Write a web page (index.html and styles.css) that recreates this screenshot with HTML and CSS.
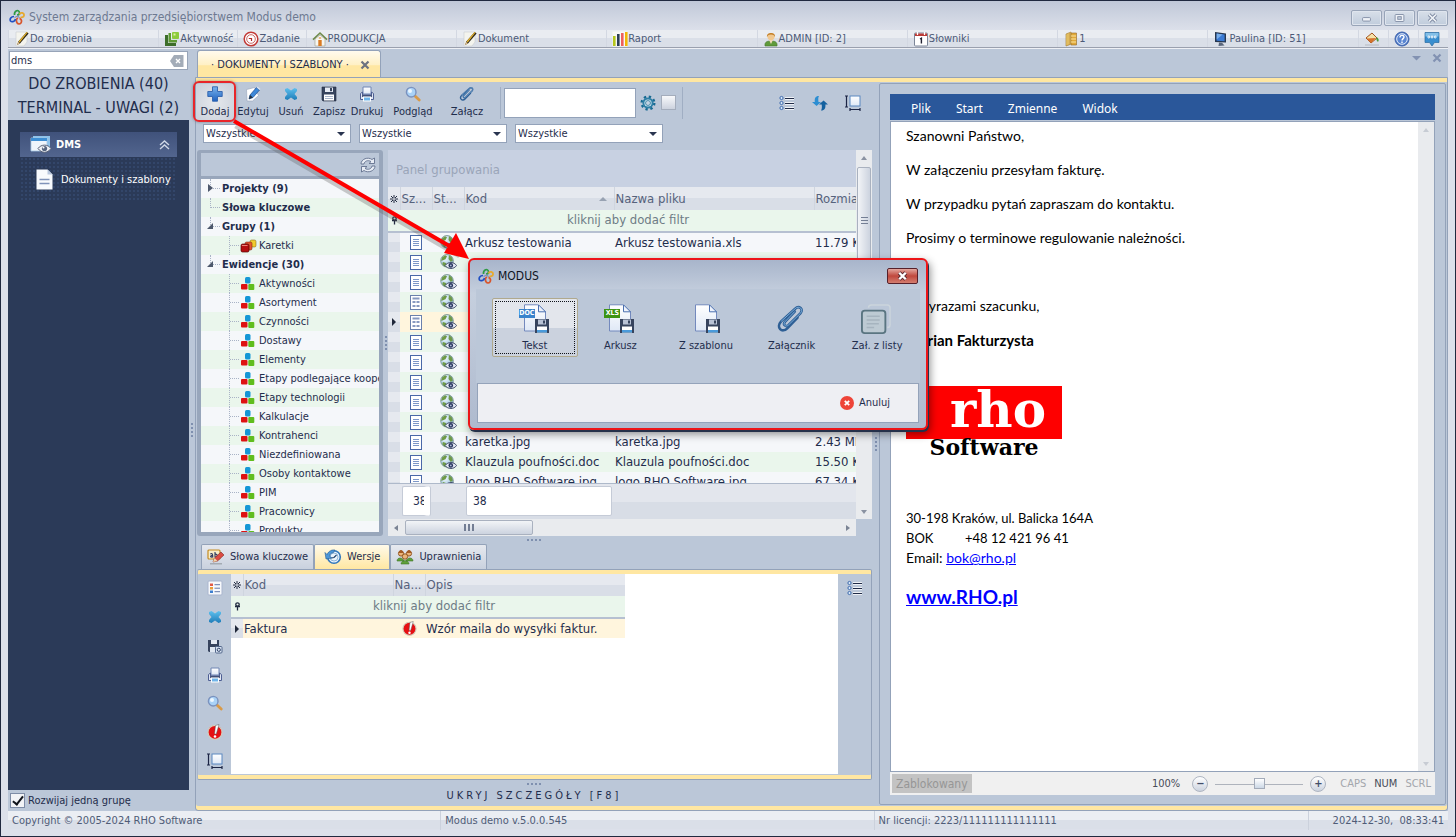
FILE: index.html
```html
<!DOCTYPE html>
<html lang="pl">
<head>
<meta charset="utf-8">
<title>System zarządzania przedsiębiorstwem Modus demo</title>
<link rel="stylesheet" href="styles.css">
</head>
<body>
<svg class="sprite" aria-hidden="true">
  <defs>
    <linearGradient id="gBlue" x1="0" y1="0" x2="0" y2="1"><stop offset="0" stop-color="#7ab4ec"/><stop offset="1" stop-color="#1f62c0"/></linearGradient>
    <linearGradient id="gSky" x1="0" y1="0" x2="0" y2="1"><stop offset="0" stop-color="#5ec0ee"/><stop offset="1" stop-color="#1e7cb8"/></linearGradient>
    <linearGradient id="gPage" x1="0" y1="0" x2="0" y2="1"><stop offset="0" stop-color="#ffffff"/><stop offset="1" stop-color="#dfe8f6"/></linearGradient>
    <radialGradient id="gGlobe" cx=".35" cy=".3" r=".9"><stop offset="0" stop-color="#f2f9fd"/><stop offset=".6" stop-color="#a9cbe2"/><stop offset="1" stop-color="#5582a0"/></radialGradient>
  </defs>
  <symbol id="i-logo" viewBox="0 0 16 16"><g fill="none" stroke-width="1.700"><path d="M5.500 6C5 2 10-.5 10.500 4c0 1.500-1 2-2.500 2" stroke="#2f9a45"/><path d="M10.500 5.500c1-3 5-1.500 4.500 1-.3 2-2.500 2-3.500 1.500" stroke="#e7a92d"/><path d="M9 9c-2.500 1-2 5.500 1 6 3-.3 3.500-4.500.5-5.500" stroke="#d8552c"/><path d="M5 7.500C2 7.500.500 10 1.500 12c1.500 1.500 4.500.5 5-2" stroke="#1f4fc4"/><path d="M5.500 8.500l3.500-1.500 1.500 2" stroke="#7d8eb8" stroke-width="1.200"/></g></symbol>
  <symbol id="i-pencilpage" viewBox="0 0 16 16"><path d="M2 1h11v10l-3 4H2z" fill="#f4f4ee" stroke="#c9ccd2" stroke-width=".6"/><path d="M3 14l1.300-3.400L12.600 1l2 1.400L6 12.400z" fill="#30291a"/><path d="M4.600 10.600L12.600 1l.9.600-7.800 9.800z" fill="#e8b52c"/><path d="M3 14l1.200-3 1.700 1.300z" fill="#ebc893"/></symbol>
  <symbol id="i-steps" viewBox="0 0 16 16"><path d="M1 4h3v8h8v3H1z" fill="#3d6e2a"/><path d="M4.500 2h2.500v7h6v2.500H4.500z" fill="#5e9a33"/><rect x="8" y="1" width="7" height="7" rx="1" fill="#8ccb3c"/><rect x="9.500" y="2.500" width="2" height="2" fill="#ddf2a4"/></symbol>
  <symbol id="i-clock" viewBox="0 0 16 16"><circle cx="8" cy="8" r="6.800" fill="#fff" stroke="#c23a36" stroke-width="1.500"/><circle cx="8" cy="8" r="4.300" fill="#fff" stroke="#c96a66" stroke-width="1"/><path d="M5.800 7.500H8.500V10" fill="none" stroke="#b02c28" stroke-width="1.200"/></symbol>
  <symbol id="i-house" viewBox="0 0 16 16"><path d="M3 8v7h10V8L8 4z" fill="#f6f6f0" stroke="#9a9a8c" stroke-width=".6"/><path d="M1 8.600L8 2l7 6.600" fill="none" stroke="#6f8b4a" stroke-width="1.600"/><rect x="6.300" y="9" width="3.400" height="6" fill="#d97b24"/><path d="M6.800 7h2.400" stroke="#e39c42" stroke-width="1.300"/></symbol>
  <symbol id="i-bars" viewBox="0 0 16 16"><rect x=".5" y=".5" width="15" height="15" fill="#f8f8f6"/><rect x="1" y="5" width="2.600" height="10" fill="#b5c61c"/><rect x="5" y="3" width="2.600" height="12" fill="#2a3d56"/><rect x="9" y="2" width="2.600" height="13" fill="#ee605c"/><rect x="13" y="1" width="2.600" height="14" fill="#f2b705"/></symbol>
  <symbol id="i-person" viewBox="0 0 16 16"><path d="M2 15c-.6-4 2-5 6-5s6.600 1 6 5z" fill="#5f9a3a" stroke="#47762b" stroke-width=".6"/><path d="M6 9h4l-2 4z" fill="#f2d9b6"/><circle cx="8" cy="5.600" r="3.600" fill="#f0c890"/><path d="M4 6C3 .5 13 .5 12 6c-1-2-2-2.600-4-2.600S5 4 4 6z" fill="#c5822c"/></symbol>
  <symbol id="i-calendar" viewBox="0 0 16 16"><rect x="1.500" y="2" width="13" height="13" rx="1" fill="#fff" stroke="#7c8698"/><path d="M2 2.500h12V5H2z" fill="#bb3b37"/><path d="M4.500 1v3M11.500 1v3" stroke="#fff" stroke-width="1.200"/><path d="M7 8l1.400-.8V12.500" fill="none" stroke="#223" stroke-width="1.400"/></symbol>
  <symbol id="i-coins" viewBox="0 0 16 16"><path d="M3 3l5-2v12l-5 2z" fill="#f0cf70" stroke="#9c742a" stroke-width=".6"/><path d="M8 2h5.500v12H8z" fill="#e0a93a" stroke="#94692a" stroke-width=".6"/><path d="M8 5h5M8 8h5M8 11h5" stroke="#fbe4a0" stroke-width="1"/><path d="M5 2.500v12M6.500 2v12" stroke="#c1913a" stroke-width=".6"/></symbol>
  <symbol id="i-monitor" viewBox="0 0 16 16"><path d="M2 1l11 1.500v9L2 11z" fill="#27374f"/><path d="M3.600 2.600l8 1v6.600l-8-.4z" fill="#3b7bd4"/><path d="M3.600 2.600l6 .8-6 5z" fill="#79aeea"/><path d="M6 11.500l3 .2 2.500 2.800-6 .5z" fill="#59667c"/></symbol>
  <symbol id="i-bucket" viewBox="0 0 16 16"><path d="M2 7l6-5 5 5-6 5z" fill="#f5e2a8" stroke="#a2531e" stroke-width="1"/><path d="M2.500 7.500L12 7l-5 5z" fill="#d5732c"/><path d="M12.500 6c2 1 3 3 1.500 5-1.500-1-2-3-1.500-5z" fill="#4b9a3a"/><path d="M1 14h14" stroke="#c8ccd4" stroke-width="2"/></symbol>
  <symbol id="i-help" viewBox="0 0 16 16"><circle cx="8" cy="8" r="7" fill="#4d78c6" stroke="#3d62aa"/><circle cx="8" cy="8" r="5.300" fill="#5a86d2" stroke="#e5edf9"/><path d="M6 6.500c0-3 4-2.600 4-.4C10 7.700 8 7.600 8 9.500M8 10.600v1.300" fill="none" stroke="#fff" stroke-width="1.400"/></symbol>
  <symbol id="i-chat" viewBox="0 0 16 16"><path d="M1 1.500h14v10h-4.500L8 15l-2.500-3.500H1z" fill="#398ecf" stroke="#286a9f" stroke-width=".7"/><path d="M1.500 2h13v3.500h-13z" fill="#82bfe8"/><g fill="none" stroke="#fff"><circle cx="4.800" cy="6" r="1"/><circle cx="8" cy="6" r="1"/><circle cx="11.200" cy="6" r="1"/></g></symbol>
  <symbol id="i-plus" viewBox="0 0 16 16"><path d="M5.500.8h5v4.700h4.700v5h-4.700v4.700h-5v-4.700H.8v-5h4.700z" fill="url(#gBlue)" stroke="#2f62ad" stroke-width=".9"/></symbol>
  <symbol id="i-edit" viewBox="0 0 16 16"><path d="M1.500 3.500l8-2 4 8-6 5.500H2z" fill="#fff" stroke="#9eabc0" stroke-width=".7"/><path d="M4 13l1-4 6.500-7.500 3 2.500L8 11.500z" fill="#3d88d8" stroke="#1c4a8c" stroke-width=".7"/><path d="M4 13l1-4 3 2.500z" fill="#24303f"/><path d="M11.500 1.500l1-1 3 2.500-1 1z" fill="#d8e3f0"/></symbol>
  <symbol id="i-cross" viewBox="0 0 16 16"><path d="M2 3l2.500-1L8 4.500 11.500 2 14 3v2L11.500 8 14 11v2l-2.500 1L8 11.500 4.500 14 2 13v-2L4.500 8 2 5z" fill="url(#gSky)"/></symbol>
  <symbol id="i-floppy" viewBox="0 0 16 16"><path d="M1 1h14v14H2l-1-1z" fill="#37445e" stroke="#222c42" stroke-width=".6"/><rect x="4" y="1.500" width="8" height="4.500" fill="#e6ebf4"/><rect x="9" y="2" width="2" height="3.200" fill="#37445e"/><rect x="3" y="8.500" width="10" height="6" fill="#fff"/><path d="M4 10.500h8M4 12.500h8" stroke="#8fa0bb" stroke-width=".8"/></symbol>
  <symbol id="i-printer" viewBox="0 0 16 16"><path d="M4 1h8v7H4z" fill="url(#gPage)" stroke="#7186b4"/><path d="M1.500 7.500L3.500 6v3h9V6l2 1.500v6h-13z" fill="#dfe5f2" stroke="#4e5f93"/><path d="M3 10h10" stroke="#2e3c66" stroke-width="1.600"/><rect x="4.500" y="11" width="7" height="4" fill="#6fb5ea" stroke="#fff"/></symbol>
  <symbol id="i-magnify" viewBox="0 0 16 16"><path d="M10 10l4.200 4" stroke="#d99a48" stroke-width="2.800" stroke-linecap="round"/><circle cx="6.200" cy="6.200" r="4.800" fill="#a9d2f7" stroke="#7b92be" stroke-width="1.400"/><circle cx="5" cy="5" r="2" fill="#ecf7ff"/></symbol>
  <symbol id="i-clip" viewBox="0 0 32 32"><path d="M20 8L9.500 19c-2.500 3 1 6 3.700 3.500L26 10c4-4.500-1.500-9-5.600-5L5.500 18.500C-.5 25 6.500 31.500 12 26L23 14.500" fill="none" stroke="#2e5f95" stroke-width="2.800" stroke-linecap="round"/><path d="M20 8L9.500 19c-2.500 3 1 6 3.700 3.500L26 10c4-4.500-1.500-9-5.600-5L5.500 18.500" fill="none" stroke="#7eb0dc" stroke-width="1"/></symbol>
  <symbol id="i-gear" viewBox="0 0 16 16"><circle cx="8" cy="8" r="6.300" fill="none" stroke="#176a92" stroke-width="2.400" stroke-dasharray="2.300 2.650"/><circle cx="8" cy="8" r="4.600" fill="#d9ecf4" stroke="#2f7fa6" stroke-width="2"/><circle cx="8" cy="8" r="2.500" fill="#c3d3e2" stroke="#176a92" stroke-width=".7"/></symbol>
  <symbol id="i-list" viewBox="0 0 16 16"><g fill="#d8e8fa" stroke="#3f6cae"><circle cx="2.500" cy="3" r="1.600"/><circle cx="2.500" cy="8" r="1.600"/><circle cx="2.500" cy="13" r="1.600"/></g><path d="M6 3.500H15M6 8.500H15M6 13.500H15" stroke="#fff" stroke-width="2.600"/><path d="M6 3.500H15M6 8.500H15M6 13.500H15" stroke="#202c48" stroke-width="1"/></symbol>
  <symbol id="i-swap" viewBox="0 0 16 16"><path d="M7 1C3 1 2.600 3.500 2.800 7H0l4.600 4L9 7H6.500C6.200 4.500 6 2.500 7 1z" fill="#2d8ed2"/><path d="M9 15.500c4 0 4.600-2.500 4.400-6H16l-4.400-4L7 9.500h2.700c.3 2.500.3 4.500-.7 6z" fill="#14619f"/></symbol>
  <symbol id="i-size" viewBox="0 0 16 16"><rect x="5" y="1" width="10" height="10" fill="url(#gPage)" stroke="#5b88c0"/><path d="M1.500 1v11M0 1h3M0 12h3M5 14.500h10M5 13v3M15 13v3" stroke="#1b2444" stroke-width="1.200"/></symbol>
  <symbol id="i-refresh" viewBox="0 0 16 16"><g fill="#e7ecf4" stroke="#62718d" stroke-width=".9"><path d="M1 7C1 2 8-.5 12 2.500L14.500 1v5.500H9L11 4.600C8 2.600 4.500 4 4 7z"/><path d="M15 9c0 5-7 7.500-11 4.500L1.500 15V9.500H7l-2 1.900C8 13.400 11.500 12 12 9z"/></g></symbol>
  <symbol id="i-dots3" viewBox="0 0 16 16"><rect x="5" y="1" width="5.500" height="6.500" rx="1.500" fill="#1597d6"/><rect x="1" y="8" width="6.500" height="5.500" rx="1" fill="#de1212"/><rect x="8.300" y="8" width="6" height="6" rx="1" fill="#60bd1e"/></symbol>
  <symbol id="i-boxes" viewBox="0 0 17 14"><rect x="10" y="1" width="6" height="7" rx="1.500" fill="#f1cc2d" stroke="#7a5a10" stroke-width=".5"/><rect x="5" y="3" width="7" height="8" rx="1.500" fill="#e4572f" stroke="#6d1a10" stroke-width=".5"/><rect x="1" y="5" width="8" height="8" rx="1.500" fill="#b50f0f" stroke="#500606" stroke-width=".7"/><path d="M2 6.500h5.500" stroke="#ee8275"/></symbol>
  <symbol id="i-doc" viewBox="0 0 12 15"><rect x=".5" y=".5" width="11" height="14" fill="#fff" stroke="#4a68a8"/><path d="M3 4.500h6M3 6.500h6M3 8.500h6M3 10.500h6" stroke="#7d97c8"/></symbol>
  <symbol id="i-form" viewBox="0 0 12 15"><rect x=".5" y=".5" width="11" height="14" fill="#fff" stroke="#6a80ac"/><path d="M2.500 3.500h7M2.500 7h3M6.500 7h3M2.500 11h3M6.500 11h3" stroke="#8799c0" stroke-width="1.800"/></symbol>
  <symbol id="i-globe" viewBox="0 0 17 16"><circle cx="7" cy="6.800" r="6.300" fill="url(#gGlobe)" stroke="#4d6d66" stroke-width=".6"/><path d="M2 3.500l3-2.300 2 1-1.500 3-2.500 1-1.800.8zM9 1l3 2.500.8 3-2 1.500L8.500 5zM3 8l3 1 1 3-1 .8C3 12 1.500 10 3 8z" fill="#6f9a48"/><path d="M5 11.500c3-4 9-4 11.500 0-2.500 4-8.500 4-11.500 0z" fill="#e3e8f2" stroke="#303b5e" stroke-width=".9"/><circle cx="10.800" cy="11.400" r="2.300" fill="#26345c"/><circle cx="10.800" cy="11.400" r=".9" fill="#aebbd8"/></symbol>
  <symbol id="i-alert" viewBox="0 0 16 16"><circle cx="8" cy="8.300" r="7" fill="#e60f12" stroke="#d3cdbb" stroke-width="1.200"/><path d="M8.500 1.500L12 .5 9.300 10H7.500z" fill="#fff" stroke="#555" stroke-width=".5"/><circle cx="8" cy="12.500" r="1.300" fill="#fff"/></symbol>
  <symbol id="i-words" viewBox="0 0 18 16"><rect x="1" y="1" width="12" height="9" rx="1" fill="#f7edc8" stroke="#c58c22" stroke-width="1.200"/><path d="M3.300 5c2-1 2.500 0 2.500 3-3 .6-3-1.500 0-1.600M8 3v5c3 .3 3-3.300 0-2.800" fill="none" stroke="#2f3b60" stroke-width="1.100"/><path d="M6 13l1.500-4 6.500-6 3 3-6.500 6z" fill="#db4b42" stroke="#7d2b27" stroke-width=".6"/><path d="M6 13l1.500-4 3 3z" fill="#efd6a8"/><path d="M3 14.800h12" stroke="#9aa0a8" stroke-width="1.200"/></symbol>
  <symbol id="i-history" viewBox="0 0 18 16"><circle cx="10" cy="8" r="6.300" fill="#eaf4fc" stroke="#3277bb" stroke-width="1.600"/><circle cx="10" cy="8" r="4" fill="none" stroke="#86aed4" stroke-width=".9"/><path d="M7.500 9l2.500-.5L12.500 6" fill="none" stroke="#1e3e66" stroke-width="1.100"/><path d="M1 3.500l2 2C4.500 2 8 .5 11 1L9.500 3.500C7 3.800 6 5 5.600 7.300L8 9 2 10z" fill="#4c97d9" stroke="#235a94" stroke-width=".6"/></symbol>
  <symbol id="i-group" viewBox="0 0 18 16"><path d="M1 12c0-4 6-4 7 0zM10 12c1-4 7-4 7 0zM5 15c0-4.500 8-4.500 8 0z" fill="#5fa03a" stroke="#3e7426" stroke-width=".6"/><g fill="#eab57a" stroke="#8c4f1c" stroke-width=".9"><circle cx="5" cy="4.500" r="2.600"/><circle cx="13" cy="4.500" r="2.600"/><circle cx="9" cy="7.500" r="2.700"/></g><path d="M2.500 4c1-4 4-4 5 0M10.500 4c1-4 4-4 5 0" fill="#a35a24"/></symbol>
  <symbol id="i-props" viewBox="0 0 16 16"><rect x="1" y="1" width="14" height="14" rx="1" fill="#f7f9fc" stroke="#a9b5ce"/><path d="M3 3.500h3v2.500H3z" fill="#e05b48"/><path d="M3 7h3v2.500H3z" fill="#e79d3b"/><path d="M3 10.500h3V13H3z" fill="#3d7fd0"/><path d="M7.500 4.700H13M7.500 8.200H13M7.500 11.700H13" stroke="#6278a8"/></symbol>
  <symbol id="i-save2" viewBox="0 0 16 16"><path d="M1 2h11v12H2l-1-1z" fill="#37445e"/><rect x="4" y="2" width="6" height="4" fill="#e6ebf4"/><rect x="3" y="9" width="7" height="5" fill="#dfe7f2"/><rect x="8.500" y="8.500" width="6.500" height="6.500" rx="1" fill="#d8e3f2" stroke="#54688c"/><circle cx="11.800" cy="11.800" r="1.600" fill="none" stroke="#32456c"/></symbol>
  <symbol id="i-window" viewBox="0 0 22 19"><path d="M3 1h17v12H3z" fill="#8ec2ea"/><path d="M1 3h16v13H1z" fill="#eef5fc" stroke="#a8c9e6" stroke-width=".8"/><path d="M1 3h16v3H1z" fill="#3e8fd4"/><path d="M8 13.500c3-4.500 10-4.500 13 0-3.500 5-9.500 5-13 0z" fill="#edf0f5" stroke="#596278"/><circle cx="14.500" cy="13.500" r="2.600" fill="#56657f"/><circle cx="13.500" cy="12.500" r="1" fill="#fff"/></symbol>
  <symbol id="i-paper" viewBox="0 0 17 21"><path d="M.5.500h11l5 5v15H.5z" fill="#f8fafd"/><path d="M11.500.500v5h5z" fill="#b9c7de"/><path d="M3.500 10.500h10M3.500 14.500h10" stroke="#7f92b9" stroke-width="1.600"/></symbol>
  <symbol id="i-savefile" viewBox="0 0 28 30"><path d="M3.500.800h13l8 7V27h-21z" fill="url(#gPage)" stroke="#7389bd"/><path d="M17.500.800v7h7z" fill="#edf2fb" stroke="#4c70b0"/><path d="M14 15h14v14H14z" fill="#37445e"/><path d="M17 15.500h8v5h-8z" fill="#b9c3d6"/><path d="M22 16.500h2v3h-2z" fill="#37445e"/><path d="M16 22.500h10v6H16z" fill="#fff"/><path d="M16 26h10v2.500H16z" fill="#4a9ada"/></symbol>
  <symbol id="i-listatt" viewBox="0 0 32 32"><path d="M8 4c0-2 1-3 3-3h17c2 0 3 1 3 3v18c0 2-1 3-3 3" fill="none" stroke="#ccd5dc" stroke-width="1.500"/><rect x="1" y="7" width="25" height="24" rx="3" fill="#bdcad3" stroke="#5a7581" stroke-width="2"/><path d="M6 13h14M6 17h14M6 21h13M6 25h8" stroke="#a6b4bf" stroke-width="1.500"/></symbol>
  <symbol id="i-key" viewBox="0 0 7 9"><circle cx="3.500" cy="2.500" r="1.700" fill="none" stroke="#222b40" stroke-width="1.300"/><path d="M1 4.500h5M3.500 4v4.500" stroke="#222b40" stroke-width="1.300"/></symbol>
  <symbol id="i-star" viewBox="0 0 8 8"><path d="M4 0v8M0 4h8M1 1l6 6M7 1L1 7" stroke="#222b40" stroke-width="1"/><circle cx="4" cy="4" r="1" fill="#e4e7ee"/></symbol>
  <symbol id="i-x" viewBox="0 0 10 10"><path d="M1.500 1.500l7 7M8.500 1.500l-7 7" stroke="currentColor" stroke-width="2.200"/></symbol>
</svg>

<header class="titlebar">
  <svg class="ic16"><use href="#i-logo"/></svg>
  <h1>System zarządzania przedsiębiorstwem Modus demo</h1>
  <div class="winbtns">
    <button aria-label="Minimalizuj"><svg viewBox="0 0 32 16"><rect x="11.500" y="7.500" width="9" height="4" rx="1" fill="#eef1f6" stroke="#7e8aa2"/></svg></button>
    <button aria-label="Maksymalizuj"><svg viewBox="0 0 32 16"><rect x="11" y="4" width="10" height="8" rx="1" fill="#eef1f6" stroke="#7e8aa2"/><rect x="14" y="6.500" width="4" height="3" fill="#c2ccdb" stroke="#7e8aa2"/></svg></button>
    <button aria-label="Zamknij"><svg viewBox="0 0 32 16"><path d="M12 4l8 8M20 4l-8 8" stroke="#7e8aa2" stroke-width="4"/><path d="M12 4l8 8M20 4l-8 8" stroke="#f1f4f8" stroke-width="2"/></svg></button>
  </div>
</header>

<nav class="menu">
  <button><svg class="ic16"><use href="#i-pencilpage"/></svg>Do zrobienia</button>
  <button><svg class="ic16"><use href="#i-steps"/></svg>Aktywność</button>
  <button><svg class="ic16"><use href="#i-clock"/></svg>Zadanie</button>
  <button><svg class="ic16"><use href="#i-house"/></svg>PRODUKCJA</button>
  <button><svg class="ic16"><use href="#i-pencilpage"/></svg>Dokument</button>
  <button><svg class="ic16"><use href="#i-bars"/></svg>Raport</button>
  <button><svg class="ic16"><use href="#i-person"/></svg>ADMIN [ID: 2]</button>
  <button><svg class="ic16"><use href="#i-calendar"/></svg>Słowniki</button>
  <button><svg class="ic16"><use href="#i-coins"/></svg>1</button>
  <button><svg class="ic16"><use href="#i-monitor"/></svg>Paulina [ID: 51]</button>
  <button aria-label="Kolory"><svg class="ic16"><use href="#i-bucket"/></svg></button>
  <button aria-label="Pomoc"><svg class="ic16"><use href="#i-help"/></svg></button>
  <button aria-label="Czat"><svg class="ic16"><use href="#i-chat"/></svg></button>
</nav>

<div class="workspace">
  <aside class="sidebar">
    <div class="search">
      <input type="text" value="dms" aria-label="Szukaj w menu">
      <button aria-label="Wyczyść"><svg viewBox="0 0 14 12"><path d="M4 0h9.500v12H4L0 6z" fill="#a3acb8"/><path d="M6 4l4 4M10 4L6 8" stroke="#fff" stroke-width="1.400"/></svg></button>
    </div>
    <a class="big" href="#">DO ZROBIENIA (40)</a>
    <a class="big" href="#">TERMINAL - UWAGI (2)</a>
    <div class="navpanel">
      <button class="navgroup"><svg class="win"><use href="#i-window"/></svg><b>DMS</b>
        <svg class="chev" viewBox="0 0 11 10"><path d="M1 5l4.500-4L10 5M1 9l4.500-4L10 9" fill="none" stroke="#cfd7e6" stroke-width="1.400"/></svg></button>
      <a class="navitem" href="#"><svg class="paper"><use href="#i-paper"/></svg>Dokumenty i szablony</a>
    </div>
    <label class="onegroup"><input type="checkbox" checked>Rozwijaj jedną grupę</label>
  </aside>
  <div class="vsplit"><i></i></div>

  <main class="docs">
    <div class="tabbar">
      <button class="doctab">· DOKUMENTY I SZABLONY ·<svg class="x10"><use href="#i-x"/></svg></button>
      <div class="tabtools">
        <button aria-label="Lista kart"><svg class="x10" viewBox="0 0 10 10"><path d="M0 3h9L4.500 7.500z" fill="currentColor"/></svg></button>
        <button aria-label="Zamknij kartę"><svg class="x10"><use href="#i-x"/></svg></button>
      </div>
    </div>
    <div class="docbody">
      <section class="left">
        <div class="toolbar">
          <button class="tb active"><svg class="ic16"><use href="#i-plus"/></svg>Dodaj</button>
          <button class="tb"><svg class="ic16"><use href="#i-edit"/></svg>Edytuj</button>
          <button class="tb"><svg class="ic16"><use href="#i-cross"/></svg>Usuń</button>
          <button class="tb"><svg class="ic16"><use href="#i-floppy"/></svg>Zapisz</button>
          <button class="tb"><svg class="ic16"><use href="#i-printer"/></svg>Drukuj</button>
          <button class="tb wide"><svg class="ic16"><use href="#i-magnify"/></svg>Podgląd</button>
          <button class="tb wide"><svg class="ic16"><use href="#i-clip"/></svg>Załącz</button>
          <span class="sep"></span>
          <input class="query" type="text" aria-label="Szukaj">
          <button class="ib" aria-label="Ustawienia"><svg class="ic16"><use href="#i-gear"/></svg></button>
          <input class="sq" type="checkbox" aria-label="Filtr">
          <span class="sep"></span>
          <span class="push"></span>
          <button class="ib" aria-label="Lista"><svg class="ic16"><use href="#i-list"/></svg></button>
          <button class="ib" aria-label="Odśwież"><svg class="ic16"><use href="#i-swap"/></svg></button>
          <button class="ib" aria-label="Rozmiar"><svg class="ic16"><use href="#i-size"/></svg></button>
        </div>
        <div class="combos">
          <span class="combo"><select aria-label="Filtr 1"><option>Wszystkie</option></select></span>
          <span class="combo"><select aria-label="Filtr 2"><option>Wszystkie</option></select></span>
          <span class="combo"><select aria-label="Filtr 3"><option>Wszystkie</option></select></span>
        </div>

        <div class="lists">
          <div class="tree">
            <div class="treehead"><button aria-label="Odśwież drzewo"><svg class="ic18"><use href="#i-refresh"/></svg></button></div>
            <ul class="nodes">
              <li class="root closed">Projekty (9)</li>
              <li class="root leaf">Słowa kluczowe</li>
              <li class="root open">Grupy (1)</li>
              <li class="kid"><svg class="box"><use href="#i-boxes"/></svg>Karetki</li>
              <li class="root open">Ewidencje (30)</li>
              <li class="kid"><svg class="ic16"><use href="#i-dots3"/></svg>Aktywności</li>
              <li class="kid"><svg class="ic16"><use href="#i-dots3"/></svg>Asortyment</li>
              <li class="kid"><svg class="ic16"><use href="#i-dots3"/></svg>Czynności</li>
              <li class="kid"><svg class="ic16"><use href="#i-dots3"/></svg>Dostawy</li>
              <li class="kid"><svg class="ic16"><use href="#i-dots3"/></svg>Elementy</li>
              <li class="kid"><svg class="ic16"><use href="#i-dots3"/></svg>Etapy podlegające kooperacji</li>
              <li class="kid"><svg class="ic16"><use href="#i-dots3"/></svg>Etapy technologii</li>
              <li class="kid"><svg class="ic16"><use href="#i-dots3"/></svg>Kalkulacje</li>
              <li class="kid"><svg class="ic16"><use href="#i-dots3"/></svg>Kontrahenci</li>
              <li class="kid"><svg class="ic16"><use href="#i-dots3"/></svg>Niezdefiniowana</li>
              <li class="kid"><svg class="ic16"><use href="#i-dots3"/></svg>Osoby kontaktowe</li>
              <li class="kid"><svg class="ic16"><use href="#i-dots3"/></svg>PIM</li>
              <li class="kid"><svg class="ic16"><use href="#i-dots3"/></svg>Pracownicy</li>
              <li class="kid"><svg class="ic16"><use href="#i-dots3"/></svg>Produkty</li>
            </ul>
          </div>
          <div class="vsplit thin"><i></i></div>
          <div class="gridwrap">
            <div class="gridmain">
              <div class="groupby">Panel grupowania</div>
              <div class="gridclip">
                <table class="grid files">
                  <colgroup><col class="c12"><col class="c32"><col class="c32"><col class="c150"><col class="c200"><col class="c100"></colgroup>
                  <thead>
                    <tr><th><svg class="s8"><use href="#i-star"/></svg></th><th>Sz...</th><th>St...</th><th><span class="sorted">Kod<i></i></span></th><th>Nazwa pliku</th><th>Rozmiar</th></tr>
                    <tr class="filter"><td class="ind"><svg class="k7"><use href="#i-key"/></svg></td><td colspan="5"><span>kliknij aby dodać filtr</span></td></tr>
                  </thead>
                  <tbody>
                    <tr><td class="ind"></td><td class="ico"><svg class="doc"><use href="#i-doc"/></svg></td><td class="ico"><svg class="glb"><use href="#i-globe"/></svg></td><td>Arkusz testowania</td><td>Arkusz testowania.xls</td><td>11.79 KB</td></tr>
                    <tr><td class="ind"></td><td class="ico"><svg class="doc"><use href="#i-doc"/></svg></td><td class="ico"><svg class="glb"><use href="#i-globe"/></svg></td><td></td><td></td><td></td></tr>
                    <tr><td class="ind"></td><td class="ico"><svg class="doc"><use href="#i-doc"/></svg></td><td class="ico"><svg class="glb"><use href="#i-globe"/></svg></td><td></td><td></td><td></td></tr>
                    <tr><td class="ind"></td><td class="ico"><svg class="doc"><use href="#i-form"/></svg></td><td class="ico"><svg class="glb"><use href="#i-globe"/></svg></td><td></td><td></td><td></td></tr>
                    <tr class="sel"><td class="ind cur"></td><td class="ico"><svg class="doc"><use href="#i-form"/></svg></td><td class="ico"><svg class="glb"><use href="#i-globe"/></svg></td><td></td><td></td><td></td></tr>
                    <tr><td class="ind"></td><td class="ico"><svg class="doc"><use href="#i-doc"/></svg></td><td class="ico"><svg class="glb"><use href="#i-globe"/></svg></td><td></td><td></td><td></td></tr>
                    <tr><td class="ind"></td><td class="ico"><svg class="doc"><use href="#i-doc"/></svg></td><td class="ico"><svg class="glb"><use href="#i-globe"/></svg></td><td></td><td></td><td></td></tr>
                    <tr><td class="ind"></td><td class="ico"><svg class="doc"><use href="#i-doc"/></svg></td><td class="ico"><svg class="glb"><use href="#i-globe"/></svg></td><td></td><td></td><td></td></tr>
                    <tr><td class="ind"></td><td class="ico"><svg class="doc"><use href="#i-doc"/></svg></td><td class="ico"><svg class="glb"><use href="#i-globe"/></svg></td><td></td><td></td><td></td></tr>
                    <tr><td class="ind"></td><td class="ico"><svg class="doc"><use href="#i-doc"/></svg></td><td class="ico"><svg class="glb"><use href="#i-globe"/></svg></td><td></td><td></td><td></td></tr>
                    <tr><td class="ind"></td><td class="ico"><svg class="doc"><use href="#i-doc"/></svg></td><td class="ico"><svg class="glb"><use href="#i-globe"/></svg></td><td>karetka.jpg</td><td>karetka.jpg</td><td>2.43 MB</td></tr>
                    <tr><td class="ind"></td><td class="ico"><svg class="doc"><use href="#i-doc"/></svg></td><td class="ico"><svg class="glb"><use href="#i-globe"/></svg></td><td>Klauzula poufności.doc</td><td>Klauzula poufności.doc</td><td>15.50 KB</td></tr>
                    <tr><td class="ind"></td><td class="ico"><svg class="doc"><use href="#i-doc"/></svg></td><td class="ico"><svg class="glb"><use href="#i-globe"/></svg></td><td>logo RHO Software.jpg</td><td>logo RHO Software.jpg</td><td>67.34 KB</td></tr>
                  </tbody>
                </table>
              </div>
              <div class="summary"><span class="sum narrow">38</span><span class="sum">38</span></div>
            </div>
            <div class="vscroll"><span class="up"></span><span class="vthumb"></span><span class="down"></span></div>
            <div class="hscroll"><span class="lt"></span><span class="hthumb"></span><span class="rt"></span></div>
          </div>
        </div>
        <div class="hsplit"><i></i></div>

        <div class="details">
          <div class="subtabs">
            <button><svg class="ic18"><use href="#i-words"/></svg>Słowa kluczowe</button>
            <button class="on"><svg class="ic18"><use href="#i-history"/></svg>Wersje</button>
            <button><svg class="ic18"><use href="#i-group"/></svg>Uprawnienia</button>
          </div>
          <div class="detbody">
            <div class="vtools">
              <button aria-label="Właściwości"><svg class="ic16"><use href="#i-props"/></svg></button>
              <button aria-label="Usuń wersję"><svg class="ic16"><use href="#i-cross"/></svg></button>
              <button aria-label="Zapisz wersję"><svg class="ic16"><use href="#i-save2"/></svg></button>
              <button aria-label="Drukuj wersję"><svg class="ic16"><use href="#i-printer"/></svg></button>
              <button aria-label="Podgląd wersji"><svg class="ic16"><use href="#i-magnify"/></svg></button>
              <button aria-label="Nadrzędna"><svg class="ic16"><use href="#i-alert"/></svg></button>
              <button aria-label="Dopasuj"><svg class="ic16"><use href="#i-size"/></svg></button>
            </div>
            <div class="detwhite">
              <table class="grid versions">
                <colgroup><col class="c12"><col class="c150"><col class="c32"><col class="c200"></colgroup>
                <thead>
                  <tr><th><svg class="s8"><use href="#i-star"/></svg></th><th>Kod</th><th>Na...</th><th>Opis</th></tr>
                  <tr class="filter"><td class="ind"><svg class="k7"><use href="#i-key"/></svg></td><td colspan="3"><span>kliknij aby dodać filtr</span></td></tr>
                </thead>
                <tbody><tr class="sel"><td class="ind cur"></td><td>Faktura</td><td class="ico"><svg class="al"><use href="#i-alert"/></svg></td><td>Wzór maila do wysyłki faktur.</td></tr></tbody>
              </table>
            </div>
            <div class="vtools right"><button aria-label="Kolumny"><svg class="ic16"><use href="#i-list"/></svg></button></div>
          </div>
        </div>
        <div class="hsplit two"><i></i></div>
        <button class="hide">UKRYJ SZCZEGÓŁY [F8]</button>
      </section>

      <div class="vsplit mid"><i></i></div>
      <section class="right-pane">
        <nav class="ribbon"><a href="#">Plik</a><a href="#">Start</a><a href="#">Zmienne</a><a href="#">Widok</a></nav>
        <div class="paperwrap">
          <article class="letter">
            <p>Szanowni Państwo,</p>
            <p>W załączeniu przesyłam fakturę.</p>
            <p>W przypadku pytań zapraszam do kontaktu.</p>
            <p>Prosimy o terminowe regulowanie należności.</p>
            <p>&nbsp;</p>
            <p>Z wyrazami szacunku,</p>
            <p class="signed">Marian Fakturzysta</p>
            <div class="brand"><div class="rho">rho</div><div class="soft">Software</div></div>
            <address><span class="num-line">30-198 Kraków, ul. Balicka 164A</span><span class="num-line"><span class="bok">BOK</span>+48 12 421 96 41</span>Email: <a href="#">bok@rho.pl</a></address>
            <a class="www" href="#">www.RHO.pl</a>
          </article>
          <div class="vscroll pale"><span class="up"></span><span class="push"></span><span class="down"></span></div>
        </div>
        <div class="docstatus">
          <span class="locked">Zablokowany</span>
          <span class="pct">100%</span>
          <button class="round" aria-label="Pomniejsz">−</button>
          <input class="zoom" type="range" min="0" max="100" value="50" aria-label="Powiększenie">
          <button class="round" aria-label="Powiększ">+</button>
          <span class="caps">CAPS</span><span class="caps num">NUM</span><span class="caps">SCRL</span>
        </div>
      </section>
    </div>
  </main>
</div>

<footer class="status">
  <span class="a">Copyright © 2005-2024 RHO Software</span>
  <span class="b">Modus demo v.5.0.0.545</span>
  <span class="c">Nr licencji: 2223/111111111111111</span>
  <span class="d">2024-12-30, &nbsp;08:33:41</span>
</footer>

<div class="dialog" role="dialog" aria-label="MODUS">
  <div class="dlghead"><svg class="ic16"><use href="#i-logo"/></svg><h2>MODUS</h2>
    <button aria-label="Zamknij okno"><svg viewBox="0 0 30 15"><path d="M11.500 4l7 7M18.500 4l-7 7" stroke="#5d2a30" stroke-width="4.400"/><path d="M11.500 4l7 7M18.500 4l-7 7" stroke="#fff" stroke-width="2.600"/></svg></button></div>
  <div class="dlgbody">
    <button class="focus"><span class="fi"><svg><use href="#i-savefile"/></svg><b class="tag">DOC</b></span>Tekst</button>
    <button><span class="fi"><svg><use href="#i-savefile"/></svg><b class="tag xls">XLS</b></span>Arkusz</button>
    <button><span class="fi"><svg><use href="#i-savefile"/></svg></span>Z szablonu</button>
    <button><span class="fi"><svg class="big32"><use href="#i-clip"/></svg></span>Załącznik</button>
    <button><span class="fi"><svg class="big32"><use href="#i-listatt"/></svg></span>Zał. z listy</button>
  </div>
  <div class="dlgfoot"><button><svg viewBox="0 0 14 14"><circle cx="7" cy="7" r="7" fill="#ee4438"/><path d="M4.800 4.800l4.400 4.400M9.200 4.800L4.800 9.200" stroke="#fff" stroke-width="1.800"/></svg>Anuluj</button></div>
</div>
<div class="mark"></div>
<svg class="arrow" viewBox="0 0 250 156"><path d="M6 8L230 138" stroke="#555" stroke-opacity=".3" stroke-width="7"/><path d="M4 4L228 134" stroke="#fe0000" stroke-width="4"/><path d="M239 142L226 116 214 136z" fill="#fe0000"/></svg>
</body>
</html>
```

FILE: styles.css
```css
:root {
  --ui: "DejaVu Sans Condensed", "DejaVu Sans", "Noto Sans", sans-serif;
  --bg: #bbc7d8;
  --line: #93a2b9;
  --ink: #1f2d4c;
  --yellow: #ffe7a2;
}
* { box-sizing: border-box; }
html, body { height: 100%; }
body {
  margin: 0;
  position: relative;
  display: flex;
  flex-direction: column;
  overflow: hidden;
  border: 1px solid #20293f;
  background: #dce0ea;
  padding: 0 7px 7px;
  font-family: var(--ui);
  font-size: 11px;
  line-height: 16px;
  color: var(--ink);
}
button, input, select { font: inherit; color: inherit; margin: 0; padding: 0; border: 0; background: none; }
button { white-space: nowrap; }
a { color: inherit; text-decoration: none; }
svg { flex: none; display: block; }
.sprite { position: absolute; width: 0; height: 0; }
.ic16 { width: 16px; height: 16px; }
.ic18 { width: 18px; height: 16px; }
.x10 { width: 10px; height: 10px; }
.push { flex: 1; }

/* title bar and menu */
.titlebar { flex: none; height: 29px; margin: 0 -7px; padding: 3px 7px 0 8px; display: flex; align-items: center; gap: 4px; background: linear-gradient(#c0c8d8, #dce0ea); }
.titlebar h1 { flex: 1; margin: 0; font-size: 12px; font-weight: normal; color: #6d7991; }
.winbtns { display: flex; gap: 2px; padding-top: 2px; }
.winbtns button { width: 31px; height: 16px; border: 1px solid #98a4b8; border-radius: 2px; background: linear-gradient(#d8dfe9, #c0ccdc); box-shadow: inset 0 0 0 1px #dfe5ee; }
.winbtns svg { width: 29px; height: 14px; }
.menu {
  flex: none;
  height: 18px;
  display: grid;
  grid-template-columns: minmax(0, 150fr) minmax(0, 79fr) minmax(0, 68fr) repeat(7, minmax(0, 150fr)) repeat(3, minmax(0, 30fr));
  border-bottom: 1px solid #9aa0ae;
  background: linear-gradient(#e9ecf1 50%, #dadfe8 50%);
  color: #4c5a77;
}
.menu button { display: flex; align-items: center; padding: 0 0 0 5px; border-left: 1px solid #d3d8e2; overflow: hidden; }

.workspace { flex: 1; min-height: 0; display: flex; background: var(--bg); border-top: 1px solid #eef0f5; }

/* sidebar */
.sidebar { width: 181px; display: flex; flex-direction: column; }
.search { flex: none; display: flex; align-items: center; height: 19px; margin: 2px 1px 2px 1px; border: 1px solid #97a4b8; background: #fff; }
.search input { flex: 1; min-width: 0; padding: 0 1px; outline: 0; }
.search button { width: 14px; margin-right: 3px; }
.search svg { width: 14px; height: 12px; }
.big { text-align: center; font-size: 16px; line-height: 24px; white-space: nowrap; }
.navpanel { flex: 1; min-height: 0; background: #2b3a58; padding: 12px; color: #fff; }
.navgroup { width: 100%; height: 25px; display: flex; align-items: center; gap: 4px; padding: 0 7px 0 10px; background: linear-gradient(#40527b, #52658e); color: #fff; }
.navgroup b { flex: 1; text-align: left; }
.win { width: 22px; height: 19px; }
.chev { width: 11px; height: 10px; }
.navitem { display: flex; align-items: center; gap: 8px; height: 45px; padding-left: 16px; background: radial-gradient(circle, #33466a 1px, transparent 1px) 0 0 / 4px 4px; white-space: nowrap; }
.paper { width: 17px; height: 21px; }
.onegroup { height: 21px; display: flex; align-items: center; gap: 3px; padding-left: 2px; }
.onegroup input { appearance: none; width: 15px; height: 15px; border: 1px solid #7e8ca6; background: #f2f3f6; position: relative; }
.onegroup input::after { content: ""; position: absolute; left: 4px; top: 0; width: 4px; height: 9px; border: solid #10131a; border-width: 0 2px 2px 0; rotate: 38deg; }

/* splitters */
.vsplit { width: 6px; display: flex; align-items: center; justify-content: center; }
.vsplit i { width: 2px; height: 14px; background: repeating-linear-gradient(#7f90af 0 2px, transparent 2px 4px); }
.vsplit.thin { width: 5px; }
.vsplit.mid { width: 7px; }
.hsplit { flex: none; height: 8px; display: flex; justify-content: center; align-items: center; }
.hsplit i { width: 14px; height: 2px; background: repeating-linear-gradient(90deg, #7f90af 0 2px, transparent 2px 4px); }

/* document tab */
.docs { flex: 1; min-width: 0; display: flex; flex-direction: column; }
.tabbar { flex: none; height: 28px; display: flex; align-items: flex-end; justify-content: space-between; padding-left: 2px; }
.doctab { height: 27px; width: 184px; display: flex; align-items: center; justify-content: space-between; padding: 2px 10px 0 13px; border: 1px solid var(--line); border-bottom: 0; border-radius: 3px 3px 0 0; background: linear-gradient(#fffbee, #fff0c4 55%, var(--yellow) 56%); }
.doctab svg { color: #6c7280; }
.tabtools { align-self: flex-start; display: flex; gap: 10px; padding: 4px 6px 0 0; color: #8292b2; }
.docbody {
  flex: 1;
  min-height: 0;
  display: grid;
  grid-template: minmax(0, 1fr) / minmax(0, 676fr) 7px minmax(0, 567fr);
  border: 1px solid var(--line);
  border-radius: 0 0 3px 3px;
  box-shadow: inset 0 4px var(--yellow), inset 0 -4px var(--yellow);
  padding: 5px 1px 5px 0;
}
.left { min-width: 0; display: flex; flex-direction: column; }

.toolbar { flex: none; height: 39px; display: flex; align-items: center; }
.tb { width: 38px; height: 37px; display: flex; flex-direction: column; align-items: center; gap: 2px; padding-top: 2px; }
.tb.wide { width: 54px; }
.tb.active { background: radial-gradient(circle, #e6e8ec, #c9d0db); }
.sep { width: 1px; height: 32px; background: #a0aec3; margin: 0 3px 0 6px; }
.query { width: 132px; height: 30px; border: 1px solid var(--line); background: #fff; }
.ib { width: 16px; margin-left: 4px; }
.push ~ .ib { margin: 0 17px 0 0; }
.push ~ .ib:last-child { margin-right: 11px; }
.sq { appearance: none; width: 15px; height: 15px; margin-left: 5px; border: 1px solid #a4adbc; background: linear-gradient(#f8f9fb, #ccd2de); }
.combos { flex: none; height: 28px; display: flex; gap: 8px; padding: 2px 7px 7px; }
.combo { position: relative; width: 148px; }
.combo select { appearance: none; width: 100%; height: 19px; padding-left: 2px; border: 1px solid var(--line); background: #fff; border-radius: 0; }
.combo::after { content: ""; position: absolute; right: 6px; top: 8px; border: 4px solid transparent; border-top-color: #2a3550; border-bottom: 0; pointer-events: none; }

/* tree */
.lists { flex: 387 1 0; min-height: 0; display: grid; grid-template: minmax(0, 1fr) / minmax(0, 187fr) 5px minmax(0, 484fr); }
.tree { min-width: 0; margin-left: 1px; border: 4px solid #98a6bb; border-width: 3px 4px 4px; border-radius: 3px; display: flex; flex-direction: column; }
.treehead { flex: none; height: 26px; display: flex; justify-content: flex-end; align-items: center; padding-right: 2px; border-bottom: 3px solid #98a6bb; background: var(--bg); }
.nodes { flex: 1; min-height: 0; overflow: hidden; margin: 0; padding: 0; list-style: none; background: #f5f7fa; }
.nodes li { height: 19px; display: flex; align-items: center; white-space: nowrap; position: relative; }
.nodes li:nth-child(even) { background: #eaf6ec; }
.root { padding-left: 21px; font-weight: bold; }
.root::before { content: ""; position: absolute; left: 9px; top: 0; width: 9px; height: 9px; border: dotted #a9b3c6; border-width: 0 0 1px 1px; }
.closed::after { content: ""; position: absolute; left: 7px; top: 5px; border: 4px solid transparent; border-left: 5px solid #4d586c; border-right: 0; }
.open::after { content: ""; position: absolute; left: 6px; top: 6px; border-bottom: 6px solid #4d586c; border-left: 6px solid transparent; }
.kid { padding-left: 39px; gap: 3px; }
.kid::before { content: ""; position: absolute; left: 28px; top: 0; width: 9px; height: 19px; border-left: 1px dotted #a9b3c6; background: repeating-linear-gradient(90deg, #a9b3c6 0 1px, transparent 1px 2px) 0 9px / 100% 1px no-repeat; }
.box { width: 17px; height: 14px; margin-right: -1px; }

/* data grids */
.gridwrap { min-width: 0; display: grid; grid-template: minmax(0, 1fr) 17px / minmax(0, 1fr) 16px; }
.gridmain { display: flex; flex-direction: column; min-width: 0; min-height: 0; }
.groupby { flex: none; height: 37px; padding: 12px 8px; font-size: 13px; color: #9aa5b9; background: #c8d1e2; }
.gridclip { flex: 1; min-height: 0; overflow: hidden; background: #f5f7fa; }
.grid { table-layout: fixed; border-collapse: collapse; font-size: 13px; }
.files { width: 526px; }
.versions { width: 394px; }
.c12 { width: 12px; }
.c32 { width: 32px; }
.c150 { width: 150px; }
.c200 { width: 200px; }
.c100 { width: 100px; }
.grid th, .grid td { padding: 0 1px; height: 20px; text-align: left; white-space: nowrap; overflow: hidden; font-weight: normal; }
.grid th { height: 23px; color: #56627c; background: linear-gradient(#e6e9ef 50%, #d9dee7 50%); border-left: 1px solid #cfd5df; }
.grid th:first-child, .grid td.ind { padding: 0; border-left: 0; background: linear-gradient(#e6e9ef 50%, #d9dee7 50%); }
.grid .filter td { text-align: center; background: #eaf6ec; color: #6e7c86; border-bottom: 2px solid #b6c0d1; height: 22px; padding-bottom: 1px; }
.files .filter span { margin-right: 58px; }
.versions th { height: 22px; }
.grid tbody tr { background: #f5f7fa; }
.grid tbody tr:nth-child(even) { background: #eaf6ec; }
.grid tbody tr.sel { background: #fff5dd; }
.grid .ico { padding: 0; }
.ico svg { margin: auto; }
.doc { width: 12px; height: 15px; }
.glb { width: 17px; height: 16px; }
.al { width: 15px; height: 15px; }
.s8 { width: 8px; height: 8px; margin: auto; }
.k7 { width: 7px; height: 9px; margin: auto; }
.cur::after { content: ""; display: block; width: 0; margin: auto; border: 4px solid transparent; border-left: 4px solid #20283a; border-right: 0; }
.sorted { display: flex; justify-content: space-between; align-items: center; padding-right: 6px; }
.sorted i { border: 4px solid transparent; border-bottom-color: #98a2b2; border-top: 0; }
.summary { flex: none; height: 36px; display: flex; gap: 36px; padding: 2px 0 2px 14px; border-top: 1px solid #aeb9ca; background: linear-gradient(#e3e6ed 50%, #d8dde6 50%); font-size: 12px; }
.sum { width: 146px; height: 30px; padding: 0 6px; line-height: 29px; border: 1px solid #c5cbd7; border-radius: 2px; background: #fff; }
.sum.narrow { width: 28px; padding: 0 0 0 10px; border-right-width: 6px; border-right-color: #fff; box-shadow: 1px 0 #c5cbd7; overflow: hidden; }

.vscroll { width: 16px; display: flex; flex-direction: column; align-items: center; background: #e9ebee; padding: 6px 0 5px; }
.up, .down, .lt, .rt { border: 3px solid transparent; }
.up { border-bottom: 4px solid #8a92a2; border-top: 0; }
.down { border-top: 4px solid #8a92a2; border-bottom: 0; }
.lt { border-right: 4px solid #7a8394; border-left: 0; }
.rt { border-left: 4px solid #7a8394; border-right: 0; }
.vthumb { flex: none; width: 14px; height: 108px; margin: 7px 0 auto; border: 1px solid #a9b1bf; border-radius: 2px; background: repeating-linear-gradient(#737e94 0 1px, transparent 1px 3px) center / 7px 9px no-repeat, linear-gradient(90deg, #f2f4f7, #ccd3df); }
.hscroll { display: flex; align-items: center; padding: 0 6px; background: #e9ebee; }
.hthumb { width: 128px; height: 15px; margin: 0 auto 0 7px; border: 1px solid #a9b1bf; border-radius: 2px; background: repeating-linear-gradient(90deg, #737e94 0 2px, transparent 2px 4px) center / 10px 7px no-repeat, linear-gradient(#f2f4f7, #ccd3df); }
.pale .up, .pale .down { opacity: .35; }

/* details */
.details { flex: 236 1 0; min-height: 0; display: flex; flex-direction: column; margin: 0 0 0 1px; }
.subtabs { flex: none; height: 25px; display: flex; padding-left: 4px; }
.subtabs button { display: flex; align-items: center; gap: 5px; padding: 0 5px; border: 1px solid var(--line); border-bottom: 0; border-radius: 2px 2px 0 0; background: linear-gradient(#e6e9ef, #c9d1de); }
.subtabs .on { padding: 0 9px; background: linear-gradient(#fffaea, var(--yellow)); }
.detbody { flex: 1; min-height: 0; display: flex; border: 1px solid var(--line); border-left-color: #a9b6ca; border-radius: 2px; box-shadow: inset 0 4px var(--yellow), inset 0 -4px var(--yellow); padding: 4px 0 5px; }
.vtools { width: 33px; padding: 6px 0 5px; display: flex; flex-direction: column; align-items: center; justify-content: space-between; }
.vtools.right { justify-content: flex-start; }
.detwhite { flex: 1; min-width: 0; background: #fff; }
.hsplit.two { height: 7px; }
.hide { flex: none; height: 18px; letter-spacing: 3px; }

/* letter */
.right-pane { min-width: 0; display: flex; flex-direction: column; border: 1px solid var(--line); border-radius: 2px; padding: 10px 10px 9px; }
.ribbon { flex: none; height: 26px; margin-bottom: 1px; display: flex; align-items: center; gap: 25px; padding: 3px 21px 0; background: #2a579a; color: #fff; font: 12px/16px "Noto Sans", sans-serif; }
.paperwrap { flex: 1; min-height: 0; display: flex; border: 1px solid var(--line); background: #fff; }
.letter { flex: 1; padding: 4px 15px; color: #000; font: 14px/20px Lato, sans-serif; overflow: hidden; }
.letter p { margin: 0 0 14px; white-space: nowrap; }
.letter .signed { font-size: 15px; font-weight: bold; }
.brand { width: 156px; height: 72px; margin: 36px 0 50px; display: flex; flex-direction: column; align-items: center; font-family: "DejaVu Serif", serif; font-weight: bold; }
.rho { width: 100%; height: 53px; padding-right: 16px; background: #fe0000; color: #fff; font-size: 50px; line-height: 48px; text-align: right; }
.soft { font-size: 22px; line-height: 17px; }
address { font-style: normal; }
.num-line { display: block; font-size: 13px; }
.bok { display: inline-block; width: 59px; }
.letter a { color: #00f; text-decoration: underline; }
.letter .www { display: block; margin-top: 17px; font-size: 19px; line-height: 24px; font-weight: bold; }
.docstatus { flex: none; height: 23px; display: flex; align-items: center; background: #f0f0f0; padding: 0 4px 0 2px; color: #474c58; }
.locked { height: 19px; padding: 2px 4px; font-size: 12px; background: #c3c3c3; color: #969696; margin-right: auto; }
.round { width: 16px; height: 16px; margin: 0 12px; border: 1px solid #aeb5c1; border-radius: 50%; background: linear-gradient(#fff, #ccd3df); font-weight: bold; line-height: 13px; color: #414d68; }
.zoom { appearance: none; width: 88px; height: 16px; margin: 0 -5px; background: linear-gradient(#aeb3bc, #aeb3bc) 0 8px / 100% 1px no-repeat; }
.zoom::-webkit-slider-thumb { appearance: none; width: 11px; height: 11px; border: 1px solid #a3abb9; background: linear-gradient(#fff, #ccd8e6); }
.caps { color: #a3a6ac; margin-left: 8px; }
.num { color: #474c58; }
.round + .caps { margin-left: 2px; }

/* status bar */
.status { flex: none; height: 18px; display: grid; grid-template-columns: minmax(0, 433fr) minmax(0, 433fr) minmax(0, 434fr) minmax(0, 139fr); background: linear-gradient(#ebeef3 50%, #dadfe8 50%); color: #4f5c77; line-height: 19px; white-space: nowrap; }
.status span { padding: 0 4px; border-right: 1px solid #cbd1dc; }
.status .d { border: 0; text-align: right; }

/* floating window */
.dialog { position: absolute; left: 467px; top: 257px; width: 460px; height: 172px; display: flex; flex-direction: column; padding: 3px 8px 5px; border: 2px solid #ed1518; border-radius: 6px; background: linear-gradient(#a8b5cb, #c5cfde 20%, #aebace); box-shadow: 1px 2px 0 #25314a, 2px 4px 8px rgba(0, 0, 0, .45); }
.dlghead { flex: none; height: 26px; display: flex; align-items: center; gap: 4px; }
.dlghead h2 { flex: 1; margin: 0; font-size: 12px; font-weight: normal; color: #10141f; }
.dlghead button { width: 31px; height: 16px; border: 1px solid #56202a; border-radius: 2px; background: linear-gradient(#e3a79e, #c0483d 50%, #d47e70); }
.dlghead button svg { width: 29px; height: 14px; }
.dlgbody { flex: 1; margin: 0 -2px; display: flex; align-items: flex-start; padding: 9px 0 0 16px; background: var(--bg); }
.dlgbody button { flex: 1; height: 59px; display: flex; flex-direction: column; align-items: center; gap: 2px; padding-top: 5px; border: 1px solid transparent; }
.dlgbody .focus { border-color: #b0a98d; border-radius: 2px; outline: 1px dotted #10131a; outline-offset: -4px; background: linear-gradient(#e3e6ec 50%, #cbd2de 50%); }
.fi { position: relative; width: 32px; height: 32px; }
.fi svg { width: 28px; height: 30px; margin-left: 2px; }
.fi .big32 { width: 30px; height: 30px; margin-left: 0; }
.tag { position: absolute; left: 0; top: 5px; width: 16px; height: 9px; font-size: 7px; line-height: 9px; color: #fff; background: #3a83cc; }
.xls { background: #3d9412; }
.dlgfoot { flex: none; height: 40px; margin: 0 -1px; display: flex; justify-content: flex-end; align-items: center; padding-right: 28px; border: 1px solid #94a3ba; background: #eeeff3; }
.dlgfoot button { display: flex; align-items: center; gap: 5px; }
.dlgfoot svg { width: 14px; height: 14px; }

/* call-out */
.mark { position: absolute; left: 192px; top: 80px; width: 43px; height: 41px; border: 2px solid #e8262a; border-radius: 6px; box-shadow: 0 0 3px rgba(60, 60, 60, .5); }
.arrow { position: absolute; left: 229px; top: 116px; width: 250px; height: 156px; fill: none; pointer-events: none; }
```
